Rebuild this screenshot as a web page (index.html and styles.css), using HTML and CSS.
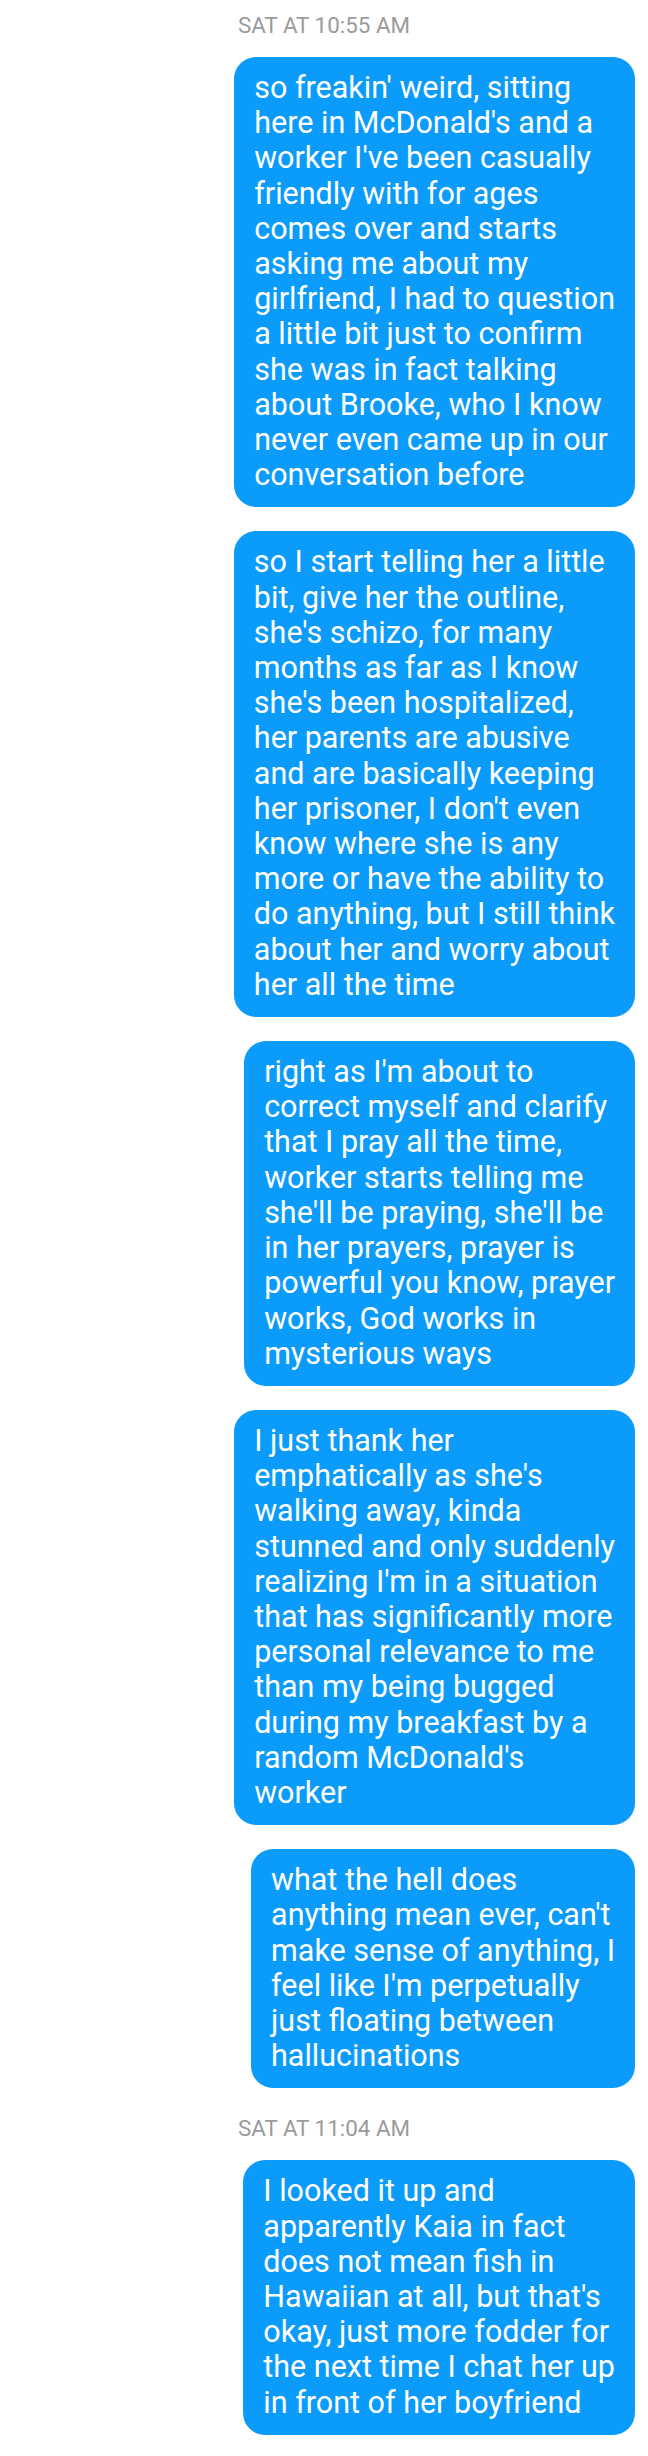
FILE: index.html
```html
<!DOCTYPE html>
<html lang="en">
<head>
<meta charset="utf-8">
<title>Messages</title>
<link rel="stylesheet" href="styles.css">
</head>
<body>
<main class="thread">
  <div class="stamp stamp-first">SAT AT 10:55 AM</div>
  <div class="bubble">so freakin' weird, sitting<br>here in McDonald's and a<br>worker I've been casually<br>friendly with for ages<br>comes over and starts<br>asking me about my<br>girlfriend, I had to question<br>a little bit just to confirm<br>she was in fact talking<br>about Brooke, who I know<br>never even came up in our<br>conversation before</div>
  <div class="bubble">so I start telling her a little<br>bit, give her the outline,<br>she's schizo, for many<br>months as far as I know<br>she's been hospitalized,<br>her parents are abusive<br>and are basically keeping<br>her prisoner, I don't even<br>know where she is any<br>more or have the ability to<br>do anything, but I still think<br>about her and worry about<br>her all the time</div>
  <div class="bubble">right as I'm about to<br>correct myself and clarify<br>that I pray all the time,<br>worker starts telling me<br>she'll be praying, she'll be<br>in her prayers, prayer is<br>powerful you know, prayer<br>works, God works in<br>mysterious ways</div>
  <div class="bubble">I just thank her<br>emphatically as she's<br>walking away, kinda<br>stunned and only suddenly<br>realizing I'm in a situation<br>that has significantly more<br>personal relevance to me<br>than my being bugged<br>during my breakfast by a<br>random McDonald's<br>worker</div>
  <div class="bubble">what the hell does<br>anything mean ever, can't<br>make sense of anything, I<br>feel like I'm perpetually<br>just floating between<br>hallucinations</div>
  <div class="stamp">SAT AT 11:04 AM</div>
  <div class="bubble">I looked it up and<br>apparently Kaia in fact<br>does not mean fish in<br>Hawaiian at all, but that's<br>okay, just more fodder for<br>the next time I chat her up<br>in front of her boyfriend</div>
</main>
</body>
</html>
```

FILE: styles.css
```css
html, body {
  margin: 0;
  padding: 0;
  background: #ffffff;
}

body {
  font-family: Roboto, "Noto Sans", "Liberation Sans", sans-serif;
  width: 648px;
  height: 2456px;
  overflow: hidden;
}

.thread {
  display: flex;
  flex-direction: column;
  align-items: flex-end;
  padding: 12px 13px 0 13px;
}

.stamp {
  align-self: stretch;
  text-align: center;
  font-size: 22.4px;
  line-height: 26px;
  color: #9b9b9b;
  margin: 3px 0 19px 0;
}

.stamp-first {
  margin-top: 0;
}

.bubble {
  background: #0a9bfb;
  color: #ffffff;
  font-size: 30.5px;
  line-height: 35.2px;
  padding: 13px 20px 15px 20px;
  border-radius: 22px;
  white-space: nowrap;
  margin-bottom: 24px;
}
```
